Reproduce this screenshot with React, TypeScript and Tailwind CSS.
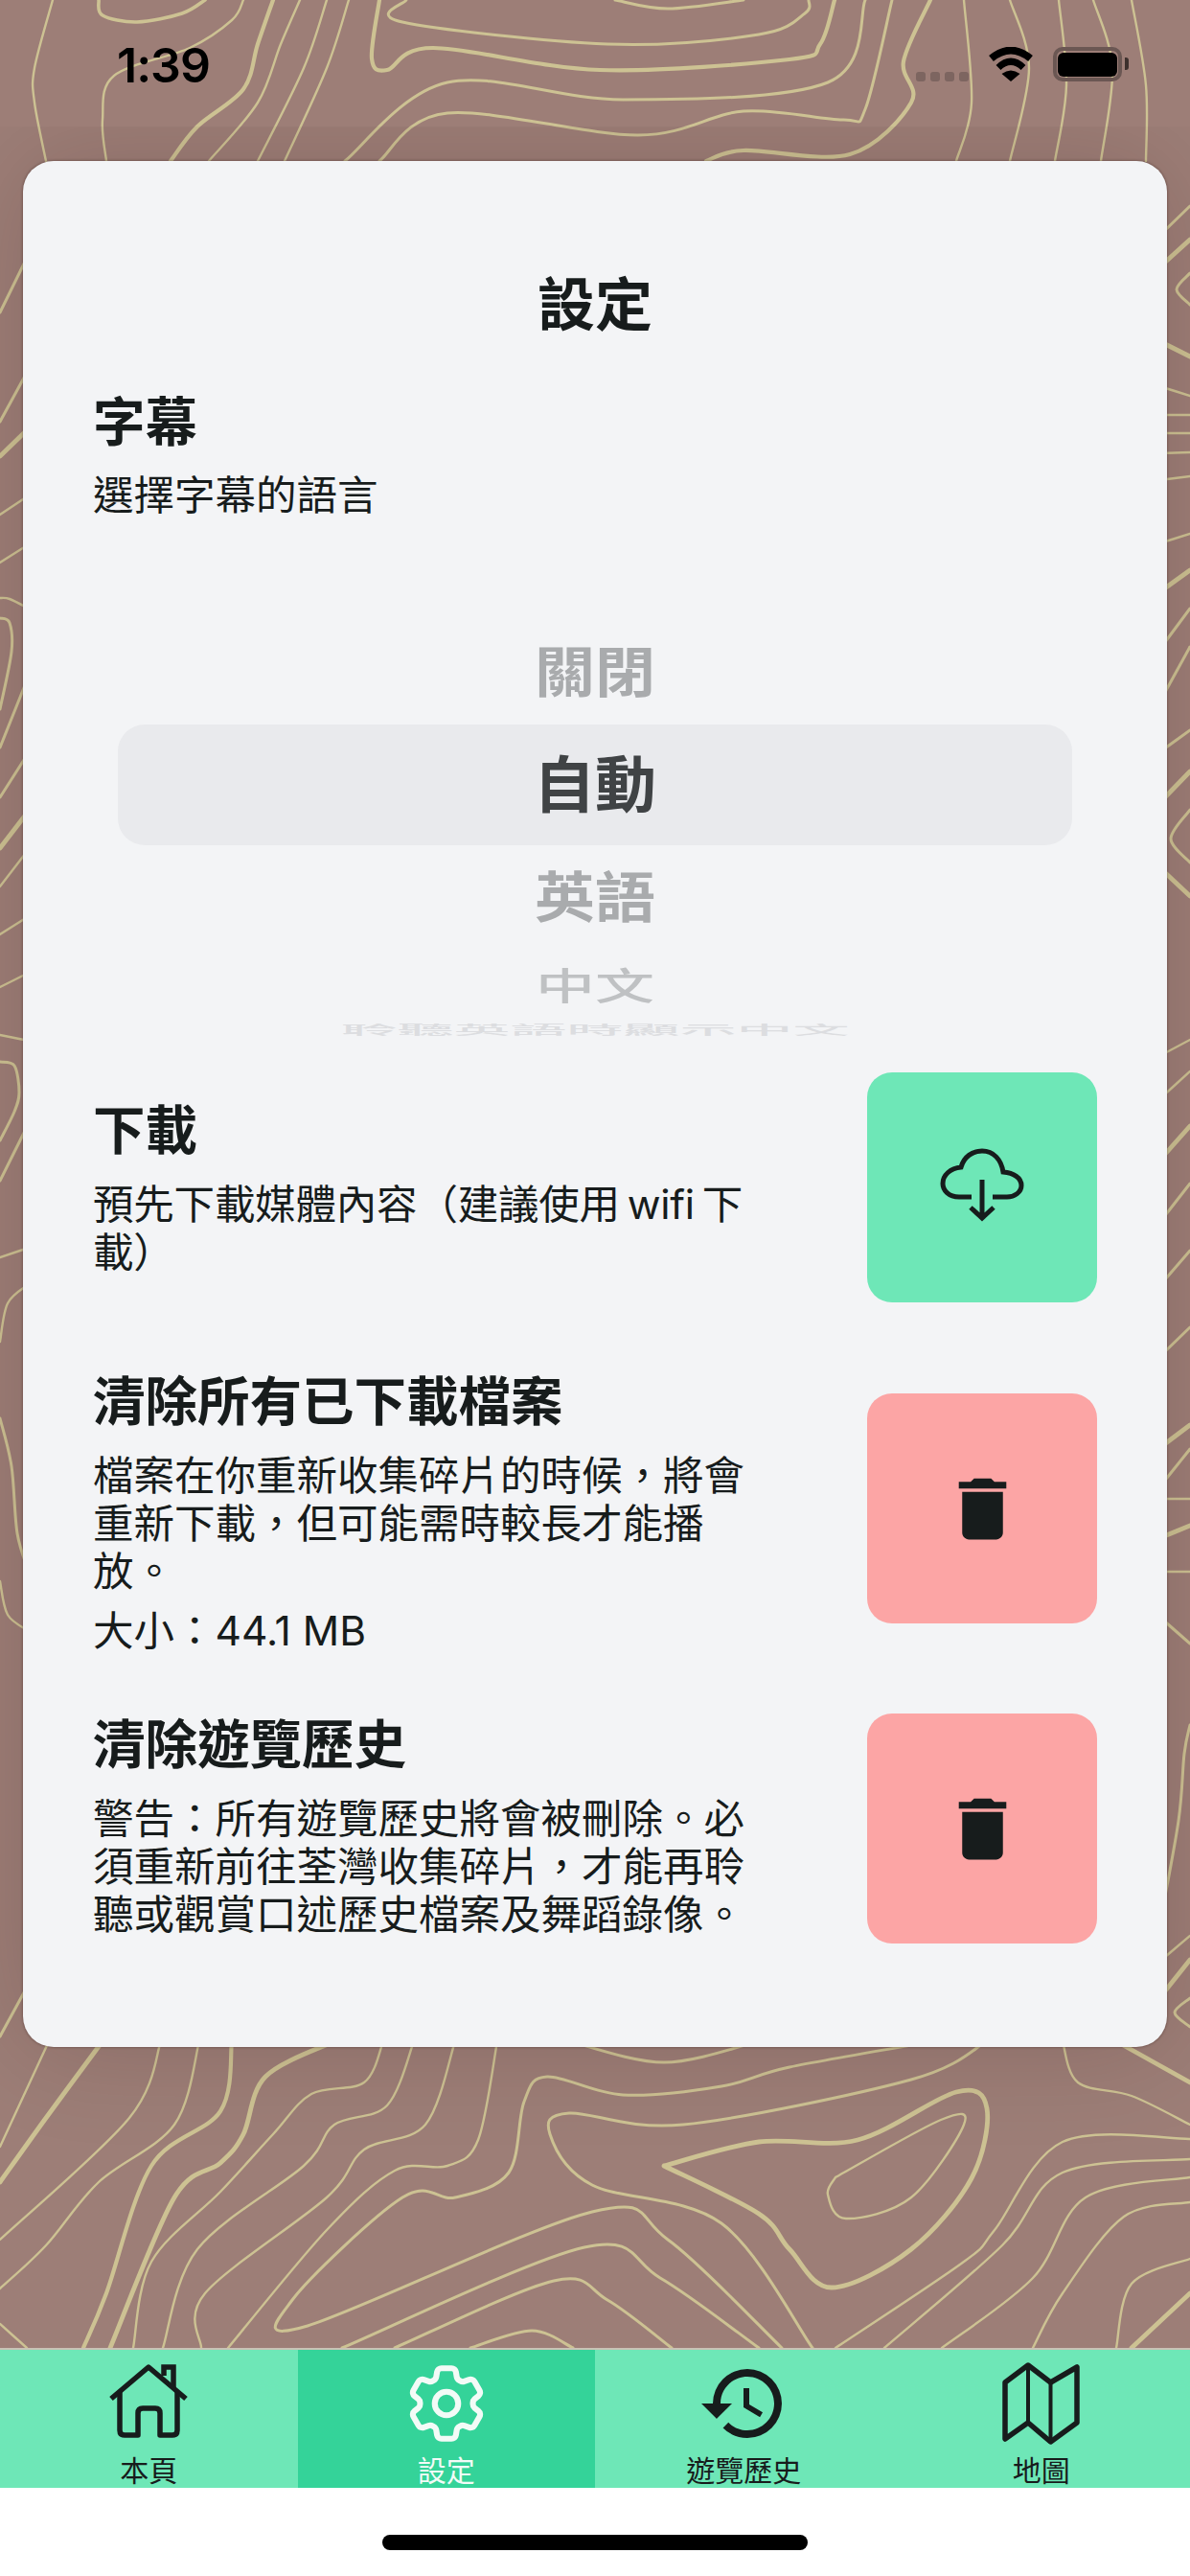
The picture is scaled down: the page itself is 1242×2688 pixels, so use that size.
import React from 'react';
import { HiOutlineCog6Tooth } from 'react-icons/hi2';
import { MdDelete, MdHistory } from 'react-icons/md';

// contour lines of the wallpaper: [stroke width, x1, y1, x2, y2, ...]
const contours: number[][] = [
  // top band
  [2, 55, 0, 36, 71, 36, 107, 48, 168],
  [3, 103, 0, 107, 16, 143, 23, 190, 14, 214, 0],
  [3.5, 285, 0, 269, 46, 254, 93, 206, 132, 178, 168],
  [2, 254, 0, 242, 21, 198, 50, 119, 79, 107, 125, 111, 168],
  [2, 313, 0, 293, 46, 269, 107, 218, 168],
  [2, 341, 0, 317, 71, 269, 168],
  [2, 364, 0, 341, 71, 297, 168],
  [3.5, 396, 0, 388, 61, 404, 73, 452, 50, 626, 73, 824, 62, 856, 46, 871, 0],
  [2.5, 424, 0, 420, 23, 634, 46, 792, 36, 840, 14, 844, 0],
  [2.5, 642, 0, 697, 9, 776, 0],
  [2.5, 903, 0, 864, 86, 650, 104, 467, 86, 360, 168],
  [3.5, 971, 0, 943, 64, 951, 107, 887, 161, 776, 157, 737, 168],
  [2.5, 931, 0, 903, 114, 880, 125, 776, 116, 666, 141, 467, 118, 396, 168],
  [2, 1006, 0, 1014, 107, 998, 168],
  [2, 1054, 0, 1074, 71, 1054, 168],
  [2, 1105, 0, 1113, 89, 1101, 168],
  [2, 1141, 0, 1161, 71, 1149, 168],
  [2, 1181, 0, 1196, 89, 1196, 168],
  // left edge
  [2.5, 30, 265, 0, 326],
  [2.5, 30, 385, 0, 440],
  [4, 30, 447, 0, 476],
  [2, 30, 517, 0, 537],
  [2, 30, 568, 0, 587],
  [2, 30, 635, 10, 625, 0, 624],
  [2.5, 0, 645, 10, 650, 12, 680, 0, 740],
  [2.5, 30, 705, 0, 780],
  [2.5, 30, 785, 0, 832],
  [4, 30, 846, 0, 885],
  [2, 30, 886, 0, 925],
  [2, 30, 956, 0, 975],
  [2, 30, 1015, 0, 1030],
  [2, 30, 1086, 0, 1080],
  [2.5, 0, 1108, 15, 1112, 20, 1140, 15, 1160, 0, 1190],
  [2.5, 30, 1172, 0, 1232],
  [2, 30, 1302, 0, 1312],
  [2, 30, 1340, 8, 1360, 0, 1400],
  [2.5, 0, 1480, 12, 1530, 18, 1600, 30, 1640],
  [2, 0, 1650, 8, 1685, 30, 1702],
  [2.5, 30, 2070, 0, 2125],
  // right edge
  [2.5, 1210, 246, 1242, 215],
  [4, 1210, 279, 1242, 250],
  [2.5, 1242, 285, 1228, 302, 1242, 318],
  [4, 1210, 356, 1242, 372],
  [2, 1210, 403, 1242, 413],
  [2, 1210, 433, 1242, 433],
  [2, 1210, 452, 1242, 452],
  [2, 1210, 473, 1242, 472],
  [2, 1210, 501, 1242, 497],
  [2, 1210, 567, 1242, 557],
  [4, 1210, 618, 1242, 595],
  [2.5, 1210, 678, 1242, 635],
  [2.5, 1210, 733, 1242, 675],
  [2.5, 1210, 785, 1242, 762],
  [4, 1210, 838, 1242, 805],
  [2.5, 1242, 845, 1222, 875, 1242, 900],
  [4, 1210, 905, 1242, 935],
  [2, 1210, 1102, 1242, 1085],
  [2, 1210, 1147, 1242, 1118],
  [4, 1210, 1211, 1242, 1175],
  [2.5, 1210, 1276, 1242, 1235],
  [2.5, 1210, 1342, 1242, 1305],
  [2.5, 1210, 1416, 1242, 1385],
  [4, 1210, 1511, 1242, 1487],
  [2.5, 1210, 1552, 1242, 1512],
  [2, 1210, 1564, 1242, 1564],
  [4, 1210, 1605, 1242, 1592],
  [2, 1210, 1640, 1242, 1640],
  [2.5, 1210, 1687, 1242, 1715],
  [2.5, 1242, 1800, 1236, 1830, 1230, 1900, 1210, 2010],
  [2, 1210, 2047, 1242, 2020],
  [4, 1210, 2085, 1242, 2045],
  [2.5, 1242, 2085, 1226, 2100, 1242, 2115],
  // bottom band
  [2, 51, 2130, 0, 2240],
  [4, 107, 2130, 48, 2210, 0, 2277],
  [2, 168, 2130, 135, 2210, 0, 2337],
  [2, 208, 2130, 182, 2217, 103, 2277, 48, 2343, 0, 2388],
  [3.5, 242, 2130, 230, 2203, 158, 2260, 111, 2393, 87, 2450],
  [4, 349, 2130, 277, 2167, 254, 2227, 230, 2257, 182, 2293, 115, 2450],
  [2, 400, 2130, 380, 2173, 325, 2185, 285, 2227, 230, 2287, 158, 2360, 139, 2450],
  [2, 432, 2130, 404, 2197, 349, 2217, 317, 2260, 206, 2347, 170, 2450],
  [2, 475, 2130, 444, 2217, 380, 2243, 341, 2293, 214, 2393, 210, 2450],
  [2, 519, 2130, 499, 2233, 467, 2260, 412, 2265, 341, 2327, 238, 2450],
  [2.5, 792, 2130, 693, 2152, 594, 2130],
  [2.5, 975, 2130, 824, 2157, 753, 2177, 650, 2186, 571, 2167, 547, 2193, 531, 2267, 475, 2293, 420, 2293, 305, 2400, 321, 2427, 618, 2308, 697, 2337, 816, 2450],
  [2.5, 1030, 2130, 951, 2170, 713, 2217, 594, 2205, 574, 2227, 618, 2280, 753, 2320, 848, 2450],
  [4, 693, 2260, 792, 2235, 895, 2233, 998, 2183, 1030, 2200, 1014, 2273, 951, 2347, 868, 2387, 824, 2347, 792, 2310, 693, 2260],
  [2, 872, 2272, 982, 2212, 1006, 2217, 951, 2293, 883, 2315, 864, 2290, 872, 2272],
  [2.5, 357, 2450, 610, 2345, 689, 2377, 792, 2450],
  [2.5, 412, 2450, 578, 2380, 634, 2400, 701, 2450],
  [2.5, 491, 2450, 555, 2432, 598, 2450],
  [2, 872, 2450, 1006, 2360, 1038, 2327, 1109, 2235, 1242, 2232],
  [2, 923, 2450, 1046, 2343, 1109, 2267, 1242, 2253],
  [2, 983, 2450, 1078, 2377, 1133, 2293, 1242, 2272],
  [2, 1078, 2450, 1109, 2393, 1173, 2313, 1242, 2298],
  [2, 1165, 2450, 1181, 2383, 1242, 2357],
  [4, 1181, 2450, 1242, 2393],
  [2, 1109, 2130, 1125, 2173, 1181, 2187, 1242, 2217],
  [4, 1165, 2130, 1242, 2173],
  [2, 0, 2425, 28, 2450],
];

const smooth = (c: number[]) => {
  const pts: number[][] = [];
  for (let i = 1; i < c.length; i += 2) pts.push([c[i], c[i + 1]]);
  let d = `M${pts[0][0]} ${pts[0][1]}`;
  for (let i = 0; i < pts.length - 1; i++) {
    const p0 = pts[Math.max(i - 1, 0)];
    const p1 = pts[i];
    const p2 = pts[i + 1];
    const p3 = pts[Math.min(i + 2, pts.length - 1)];
    d += ` C${p1[0] + (p2[0] - p0[0]) / 6} ${p1[1] + (p2[1] - p0[1]) / 6} ${p2[0] - (p3[0] - p1[0]) / 6} ${p2[1] - (p3[1] - p1[1]) / 6} ${p2[0]} ${p2[1]}`;
  }
  return d;
};

const Topo = () => (
  <svg className="absolute left-0 top-0" width={1242} height={2450} viewBox="0 0 1242 2450" fill="none" stroke="#cdc293">
    {contours.map((c, i) => (
      <path key={i} d={smooth(c)} strokeWidth={c[0] * 1.2} strokeLinecap="round" />
    ))}
  </svg>
);

const StatusBar = () => (
  <div className="relative z-10 h-[132px] shrink-0 overflow-hidden bg-[#9d7e77]">
    <Topo />
    <div className="relative flex h-full items-start justify-between pl-[122px] pr-[64px]">
      <span className="mt-[38px] text-[50px] leading-[60px] font-semibold tracking-[-1px] text-black">1:39</span>
      <div className="mt-[49px] flex items-start">
        <div className="mt-[26px] mr-[20px] flex gap-[5px]">
          <div className="h-[10px] w-[10px] rounded-[3px] bg-[#7d6560]" />
          <div className="h-[10px] w-[10px] rounded-[3px] bg-[#7d6560]" />
          <div className="h-[10px] w-[10px] rounded-[3px] bg-[#7d6560]" />
          <div className="h-[10px] w-[10px] rounded-[3px] bg-[#7d6560]" />
        </div>
        <svg width={48} height={36} viewBox="0 0 48 36" className="mr-[20px]">
          <path d="M3.5 12 Q24 -5 44.5 12" fill="none" stroke="#000" strokeWidth={7.5} />
          <path d="M11 21.5 Q24 9 37 21.5" fill="none" stroke="#000" strokeWidth={7} />
          <path d="M24 36 L14.5 28 Q24 21 33.5 28 Z" fill="#000" />
        </svg>
        <div className="flex h-[36px] w-[72px] items-center justify-center rounded-[10px] border-[4px] border-[#6b5753]">
          <div className="h-[25px] w-[62px] rounded-[6px] bg-black" />
        </div>
        <div className="mt-[11px] ml-[3px] h-[13px] w-[4px] rounded-r-[3px] bg-[#3d302d]" />
      </div>
    </div>
  </div>
);

const Picker = () => (
  <div className="flex flex-col items-center pt-[119px]">
    <div className="h-[80px] scale-y-90 text-[63px] leading-[80px] font-semibold text-[#a9abad]">關閉</div>
    <div className="mt-[15px] flex h-[126px] w-[996px] items-center justify-center rounded-[28px] bg-[#e9eaed] text-[64px] leading-[80px] font-semibold text-[#404345]">
      自動
    </div>
    <div className="mt-[14px] h-[80px] scale-y-90 text-[63px] leading-[80px] font-semibold text-[#a9abad]">英語</div>
    <div className="mt-[13px] h-[80px] scale-y-[0.62] text-[62px] leading-[80px] font-medium text-[#bfc1c3]">中文</div>
    <div className="-mt-[35px] h-[80px] scale-y-[0.22] text-[59px] leading-[80px] font-medium text-[#dcdde0]">聆聽英語時顯示中文</div>
  </div>
);

type RowProps = {
  title: string;
  desc: string;
  descClass?: string;
  extra?: string;
  color: string;
  className?: string;
  children: React.ReactNode;
};

const SettingRow = ({ title, desc, descClass, extra, color, className, children }: RowProps) => (
  <div className="flex items-center justify-between">
    <div className="w-[700px]">
      <h2 className="text-[54.5px] leading-[66px] font-semibold">{title}</h2>
      <p className={`mt-[20px] text-[42.5px] leading-[50px] ${descClass ?? ''}`}>{desc}</p>
      {extra && <p className="mt-[12px] text-[42.5px] leading-[50px]">{extra}</p>}
    </div>
    <button className={`flex h-[240px] w-[240px] shrink-0 items-center justify-center rounded-[26px] ${color} ${className ?? ''}`}>{children}</button>
  </div>
);

const CloudDownload = () => (
  <svg width={100} height={100} viewBox="0 0 100 100" fill="none" stroke="#171c1c" strokeWidth={5}>
    <path d="M39 60 H26 C15 60 9 53 9 46 C9 37 17 30 28 29 C31 18 40 12 50 12 C62 12 70 21 72 34 C83 35 91 40 91 48 C91 55 84 60 76 60 H61" />
    <path d="M50 42 V82 M38 71 L50 82 L62 71" />
  </svg>
);

const HomeIcon = () => (
  <svg width={90} height={90} viewBox="0 0 90 90" fill="none" stroke="#171c1c" strokeWidth={5.5} strokeLinejoin="round">
    <path d="M6 40 L45 7 L84 40" />
    <path d="M15 32 V73 Q15 78 20 78 H34 V55 Q34 50 39 50 H52 Q57 50 57 55 V78 H70 Q75 78 75 73 V32" />
    <path d="M61 16 V7 H71 V30" strokeLinejoin="miter" />
  </svg>
);

const MapIcon = () => (
  <svg width={90} height={90} viewBox="0 0 90 90" fill="none" stroke="#171c1c" strokeWidth={5.5} strokeLinejoin="round" className="ml-[5px]">
    <path d="M5 23 L29 5 L52.5 23 L80 7 V65 L52.5 85 L29 65 L5 82 Z" />
    <path d="M29 5 V65 M52.5 23 V85" strokeWidth={4} />
  </svg>
);

const tabClass = 'flex h-[146px] flex-1 flex-col items-center pt-[11px]';
const tabLabel = 'mt-[7px] text-[30px] leading-[36px]';

const TabBar = () => (
  <div className="flex h-[146px] shrink-0 border-t-2 border-[#c9c3b6] bg-[#6ee7b7] text-[#171c1c]">
    <div className={tabClass}>
      <HomeIcon />
      <span className={tabLabel}>本頁</span>
    </div>
    <div className={`${tabClass} bg-[#34d399] text-[#f3fbf7]`}>
      <div className="flex h-[90px] items-center justify-center">
        <HiOutlineCog6Tooth size={98} />
      </div>
      <span className={tabLabel}>設定</span>
    </div>
    <div className={tabClass}>
      <div className="flex h-[90px] items-center justify-center">
        <MdHistory size={96} />
      </div>
      <span className={tabLabel}>遊覽歷史</span>
    </div>
    <div className={tabClass}>
      <MapIcon />
      <span className={tabLabel}>地圖</span>
    </div>
  </div>
);

export default function App() {
  return (
    <div className="relative flex h-[2688px] w-[1242px] flex-col overflow-hidden bg-[#9d7e77] font-['Inter','Noto_Sans_CJK_TC',sans-serif] text-[#171c1c]">
      <Topo />
      <StatusBar />

      <div className="relative mx-[24px] mt-[36px] rounded-[32px] bg-[#f3f4f6] px-[73px] pt-[114px] pb-[108px] shadow-[0_0_110px_rgba(40,15,10,0.16),0_0_3px_rgba(40,15,10,0.5)]">
        <h1 className="text-center text-[60px] leading-[72px] font-semibold">設定</h1>

        <h2 className="mt-[53px] text-[54.5px] leading-[66px] font-semibold">字幕</h2>
        <p className="mt-[19px] text-[42.5px] leading-[50px]">選擇字幕的語言</p>
        <Picker />

        <div className="mt-[5px] flex flex-col">
          <SettingRow
            title="下載"
            desc="預先下載媒體內容（建議使用 wifi 下載）"
            descClass="[word-spacing:-4px] tracking-[-0.2px]"
            color="bg-[#6ee7b7]"
          >
            <CloudDownload />
          </SettingRow>
          <div className="mt-[70px]">
            <SettingRow
              title="清除所有已下載檔案"
              desc="檔案在你重新收集碎片的時候，將會重新下載，但可能需時較長才能播放。"
              extra="大小：44.1 MB"
              color="bg-[#fca5a5]"
              className="mb-[8px]"
            >
              <MdDelete size={85} />
            </SettingRow>
          </div>
          <div className="mt-[55px]">
            <SettingRow
              title="清除遊覽歷史"
              desc="警告：所有遊覽歷史將會被刪除。必須重新前往荃灣收集碎片，才能再聆聽或觀賞口述歷史檔案及舞蹈錄像。"
              color="bg-[#fca5a5]"
              className="mt-[6px]"
            >
              <MdDelete size={85} />
            </SettingRow>
          </div>
        </div>
      </div>

      <div className="flex-1" />
      <div className="relative">
        <TabBar />
      </div>
      <div className="relative flex h-[92px] shrink-0 justify-center bg-white pt-[49px]">
        <div className="h-[16px] w-[444px] rounded-full bg-black" />
      </div>
    </div>
  );
}
